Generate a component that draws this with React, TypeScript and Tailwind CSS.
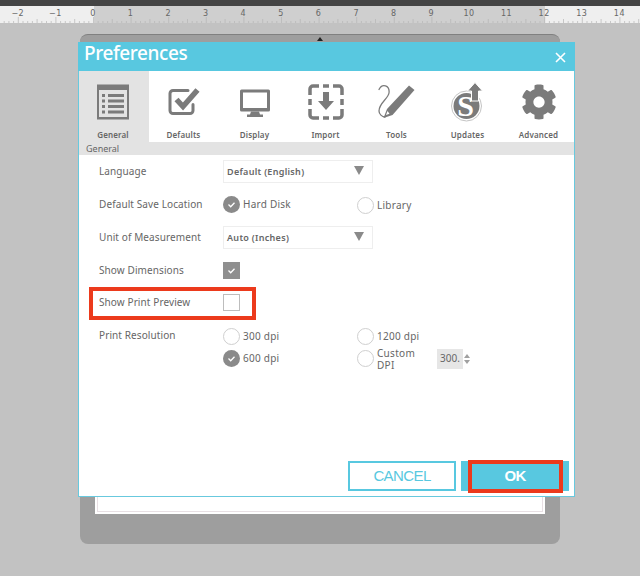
import React from "react";
import { FaCog } from "react-icons/fa";

const G = "#7b7b7b";
const sans = "font-['Noto_Sans',sans-serif]";

function Ruler() {
  const labels = [-2, -1, 0, 1, 2, 3, 4, 5, 6, 7, 8, 9, 10, 11, 12, 13, 14];
  const ticks = [];
  for (let i = -24; i < 130; i++) {
    const x = 93.5 + i * 4.7;
    const h = i % 8 === 0 ? 6 : i % 4 === 0 ? 4 : 2;
    ticks.push(<line key={i} x1={x} x2={x} y1={17 - h} y2={17} stroke="#b4b4b4" strokeWidth="0.7" />);
  }
  return (
    <svg width="640" height="17" className="block">
      <rect width="640" height="17" fill="#cfcfcf" />
      <rect width="94" height="17" fill="#efefef" />
      <rect x="545" width="95" height="17" fill="#efefef" />
      {ticks}
      {labels.map((n) => (
        <text key={n} x={93 + n * 37.6} y="10" textAnchor="middle" fontSize="8" fill="#666" letterSpacing="0.5" fontFamily="DejaVu Sans, sans-serif">
          {n < 0 ? "\u2212" + -n : n}
        </text>
      ))}
    </svg>
  );
}

const icons: Record<string, React.ReactNode> = {
  General: (
    <svg width="34" height="36" viewBox="0 0 34 36">
      <path fill={G} fillRule="evenodd" d="M1 0.5h32v35H1z M3 6v27h28V6z" />
      <g fill={G}>
        <rect x="6" y="10" width="3" height="3" /><rect x="12" y="10" width="16" height="3" />
        <rect x="6" y="15.500" width="3" height="3" /><rect x="12" y="15.500" width="16" height="3" />
        <rect x="6" y="21" width="3" height="3" /><rect x="12" y="21" width="16" height="3" />
        <rect x="6" y="26.500" width="3" height="3" /><rect x="12" y="26.500" width="16" height="3" />
      </g>
    </svg>
  ),
  Defaults: (
    <svg width="34" height="36" viewBox="0 0 34 36">
      <path fill="none" stroke={G} strokeWidth="3" strokeLinecap="round" d="M21 6.500H6a3 3 0 0 0-3 3v17a3 3 0 0 0 3 3h17a3 3 0 0 0 3-3v-6" />
      <path fill="none" stroke={G} strokeWidth="5.500" d="M9.500 15.500l6.500 7L30.500 6" />
    </svg>
  ),
  Display: (
    <svg width="34" height="36" viewBox="0 0 34 36">
      <path fill={G} fillRule="evenodd" d="M3.500 5.500h27a1.500 1.500 0 0 1 1.500 1.500v19a1.500 1.500 0 0 1-1.500 1.500h-27a1.500 1.500 0 0 1-1.500-1.500V7a1.500 1.500 0 0 1 1.500-1.500z M5 8.500v15.500h24V8.500z" />
      <path fill={G} d="M13 27.500h8l1 3h3v2.500H9v-2.500h3z" />
    </svg>
  ),
  Import: (
    <svg width="36" height="36" viewBox="0 0 36 36">
      <g fill="none" stroke={G} strokeWidth="3.500">
        <path d="M2 11V5a3 3 0 0 1 3-3h6" /><path d="M25 2h6a3 3 0 0 1 3 3v6" />
        <path d="M34 25v6a3 3 0 0 1-3 3h-6" /><path d="M11 34H5a3 3 0 0 1-3-3v-6" />
        <path d="M15 2h6" /><path d="M15 34h6" /><path d="M2 15v6" /><path d="M34 15v6" />
      </g>
      <path fill={G} d="M15 8h6v9h5l-8 9-8-9h5z" />
    </svg>
  ),
  Tools: (
    <svg width="38" height="36" viewBox="0 0 38 36">
      <path fill="none" stroke={G} strokeWidth="1.300" strokeLinecap="round" d="M1 5.500C4-1 12 1 11 9 10 15 1 19 1 27c0 3 3 6 6 6" />
      <path fill={G} fillRule="evenodd" d="M31 1.500l5.500 4.500-22 25-9 3 3.500-9z M9.500 27l-1.500 4 3.500-1.300z" />
    </svg>
  ),
  Updates: (
    <svg width="34" height="40" viewBox="0 0 34 40">
      <circle cx="15.500" cy="24" r="15" fill="none" stroke="#c4c4c4" strokeWidth="1" />
      <circle cx="15.500" cy="24" r="13" fill={G} />
      <text x="14.500" y="34" textAnchor="middle" fontSize="30" fontWeight="700" fill="#fff" fontFamily="Liberation Serif, serif">S</text>
      <path fill={G} stroke="#fff" strokeWidth="1" d="M24 0.500l7.500 8.500h-4v10h-7V9h-4z" />
    </svg>
  ),
  Advanced: <FaCog size={36} color={G} />,
};

const tabs = ["General", "Defaults", "Display", "Import", "Tools", "Updates", "Advanced"];

function Radio({ on }: { on?: boolean }) {
  return on ? (
    <span className="flex h-[17px] w-[17px] shrink-0 items-center justify-center rounded-full bg-[#8a8a8a]">
      <svg width="11" height="11" viewBox="0 0 11 11"><path d="M2.500 5.500l2.200 2.200 3.800-4" fill="none" stroke="#fff" strokeWidth="1.300" /></svg>
    </span>
  ) : (
    <span className="h-[17px] w-[17px] shrink-0 rounded-full border border-[#cfcfcf] bg-white" />
  );
}

function Option({ on, children }: { on?: boolean; children: React.ReactNode }) {
  return (
    <div className="flex items-center gap-[3px]">
      <Radio on={on} />
      <span className="text-[10px] tracking-[0.25px] text-[#666]">{children}</span>
    </div>
  );
}

function Select({ value }: { value: string }) {
  return (
    <div className="flex h-[23px] w-[150px] items-center justify-between border border-[#eeeeee] pl-[3px] pr-[8px]">
      <span className="text-[9px] font-semibold tracking-[0.3px] text-[#666]">{value}</span>
      <span className="h-0 w-0 -translate-y-[1px] border-x-[5px] border-t-[9px] border-x-transparent border-t-[#8a8a8a]" />
    </div>
  );
}

function Row({ label, h, children }: { label: string; h: string; children?: React.ReactNode }) {
  return (
    <div className={`flex items-center ${h}`}>
      <span className="w-[124px] shrink-0 text-[10px] tracking-[0.1px] text-[#666]">{label}</span>
      {children}
    </div>
  );
}

export default function App() {
  return (
    <div className={`relative h-[576px] w-[640px] overflow-hidden bg-[#c2c2c2] ${sans}`}>
      <div className="h-[6px] bg-[#444444]" />
      <Ruler />

      {/* mat */}
      <div className="relative ml-[80px] mt-[11px] h-[510px] w-[480px] rounded-[8px] border-t border-[#808080] bg-[#9e9e9e] px-[15px] pb-[30px] pt-[30px]">
        <div className="h-full bg-white p-[2px]">
          <div className="h-full border border-[#e8e0e4]" />
        </div>
        <span className="absolute left-[237px] top-[2px] h-0 w-0 border-x-[3px] border-b-[4px] border-x-transparent border-b-[#222]" />
      </div>

      {/* dialog */}
      <div className="absolute left-[78px] top-[42px] flex h-[455px] w-[497px] flex-col border-x border-b border-[#68c9de] bg-white">
        <div className="-mx-px flex h-[29px] shrink-0 justify-between bg-[#58c8e0] pl-[6px] pr-[9px]">
          <span className="text-[19px] font-medium leading-[22px] tracking-[-0.4px] text-white">Preferences</span>
          <svg width="11" height="11" viewBox="0 0 11 11" className="mt-[10px]">
            <path d="M1 1l9 9M10 1l-9 9" stroke="#fff" strokeWidth="1.600" />
          </svg>
        </div>

        <div className="grid h-[71px] shrink-0 grid-cols-[70px_repeat(6,71px)]">
          {tabs.map((t, i) => (
            <div key={t} className={`flex flex-col items-center pr-[2px] ${i === 0 ? "bg-[#e3e3e3]" : ""}`}>
              <div className="flex h-[59px] items-center justify-center pt-[2px]">{icons[t]}</div>
              <span className="text-[8px] font-semibold leading-[10px] tracking-[0.15px] text-[#666]">{t}</span>
            </div>
          ))}
        </div>

        <div className="flex h-[13px] shrink-0 items-center bg-[#e3e3e3] pl-[7px] text-[9px] text-[#666]">General</div>

        <div className="flex grow flex-col pl-[20px] pt-[5px]">
          <Row label="Language" h="h-[23px]"><Select value="Default (English)" /></Row>
          <Row label="Default Save Location" h="h-[43px]">
            <div className="grid grid-cols-[134px_auto]">
              <Option on>Hard Disk</Option>
              <div className="translate-y-[1px]"><Option>Library</Option></div>
            </div>
          </Row>
          <Row label="Unit of Measurement" h="h-[23px]"><Select value="Auto (Inches)" /></Row>
          <Row label="Show Dimensions" h="h-[42px]">
            <span className="flex h-[17px] w-[17px] items-center justify-center bg-[#8f8f8f]">
              <svg width="11" height="11" viewBox="0 0 11 11"><path d="M2.500 5.500l2.200 2.200 3.800-4" fill="none" stroke="#fff" strokeWidth="1.300" /></svg>
            </span>
          </Row>
          <Row label="Show Print Preview" h="h-[23px]">
            <span className="h-[17px] w-[17px] border border-[#bdbdbd] bg-white" />
          </Row>
          <div className="mt-[14px] flex">
            <span className="w-[124px] shrink-0 text-[10px] tracking-[0.1px] text-[#666]">Print Resolution</span>
            <div className="grid grid-cols-[134px_auto] gap-y-[5px]">
              <Option>300 dpi</Option>
              <Option>1200 dpi</Option>
              <Option on>600 dpi</Option>
              <div className="flex h-[17px] items-center">
                <Radio />
                <span className="ml-[3px] w-[60px] text-[10px] tracking-[0.3px] text-[#666]">
                  <span className="block h-[12px] leading-[12px]">Custom</span>
                  <span className="block h-[12px] leading-[12px]">DPI</span>
                </span>
                <span className="flex h-[20px] w-[26px] shrink-0 items-center justify-center bg-[#e6e6e6] text-[10px] text-[#666]">300.</span>
                <span className="ml-[1px] flex flex-col gap-[2px]">
                  <span className="h-0 w-0 border-x-[3px] border-b-[4px] border-x-transparent border-b-[#a0a0a0]" />
                  <span className="h-0 w-0 border-x-[3px] border-t-[4px] border-x-transparent border-t-[#a0a0a0]" />
                </span>
              </div>
            </div>
          </div>

          <div className="mb-[5px] mt-auto flex justify-end gap-[5px] pr-[5px] font-['Liberation_Sans',sans-serif]">
            <div className="flex h-[30px] w-[108px] items-center justify-center border-2 border-[#58c8e0] text-[15px] tracking-[-0.6px] text-[#58c8e0]">CANCEL</div>
            <div className="flex h-[30px] w-[108px] items-center justify-center bg-[#58c8e0] text-[15px] font-bold tracking-[-0.8px] text-white">OK</div>
          </div>
        </div>
      </div>

      {/* annotations */}
      <div className="absolute left-[89px] top-[287px] h-[33px] w-[167px] border-[4px] border-[#ec3a1c]" />
      <div className="absolute left-[468px] top-[460px] h-[33px] w-[95px] border-[4px] border-[#ec3a1c]" />
    </div>
  );
}
